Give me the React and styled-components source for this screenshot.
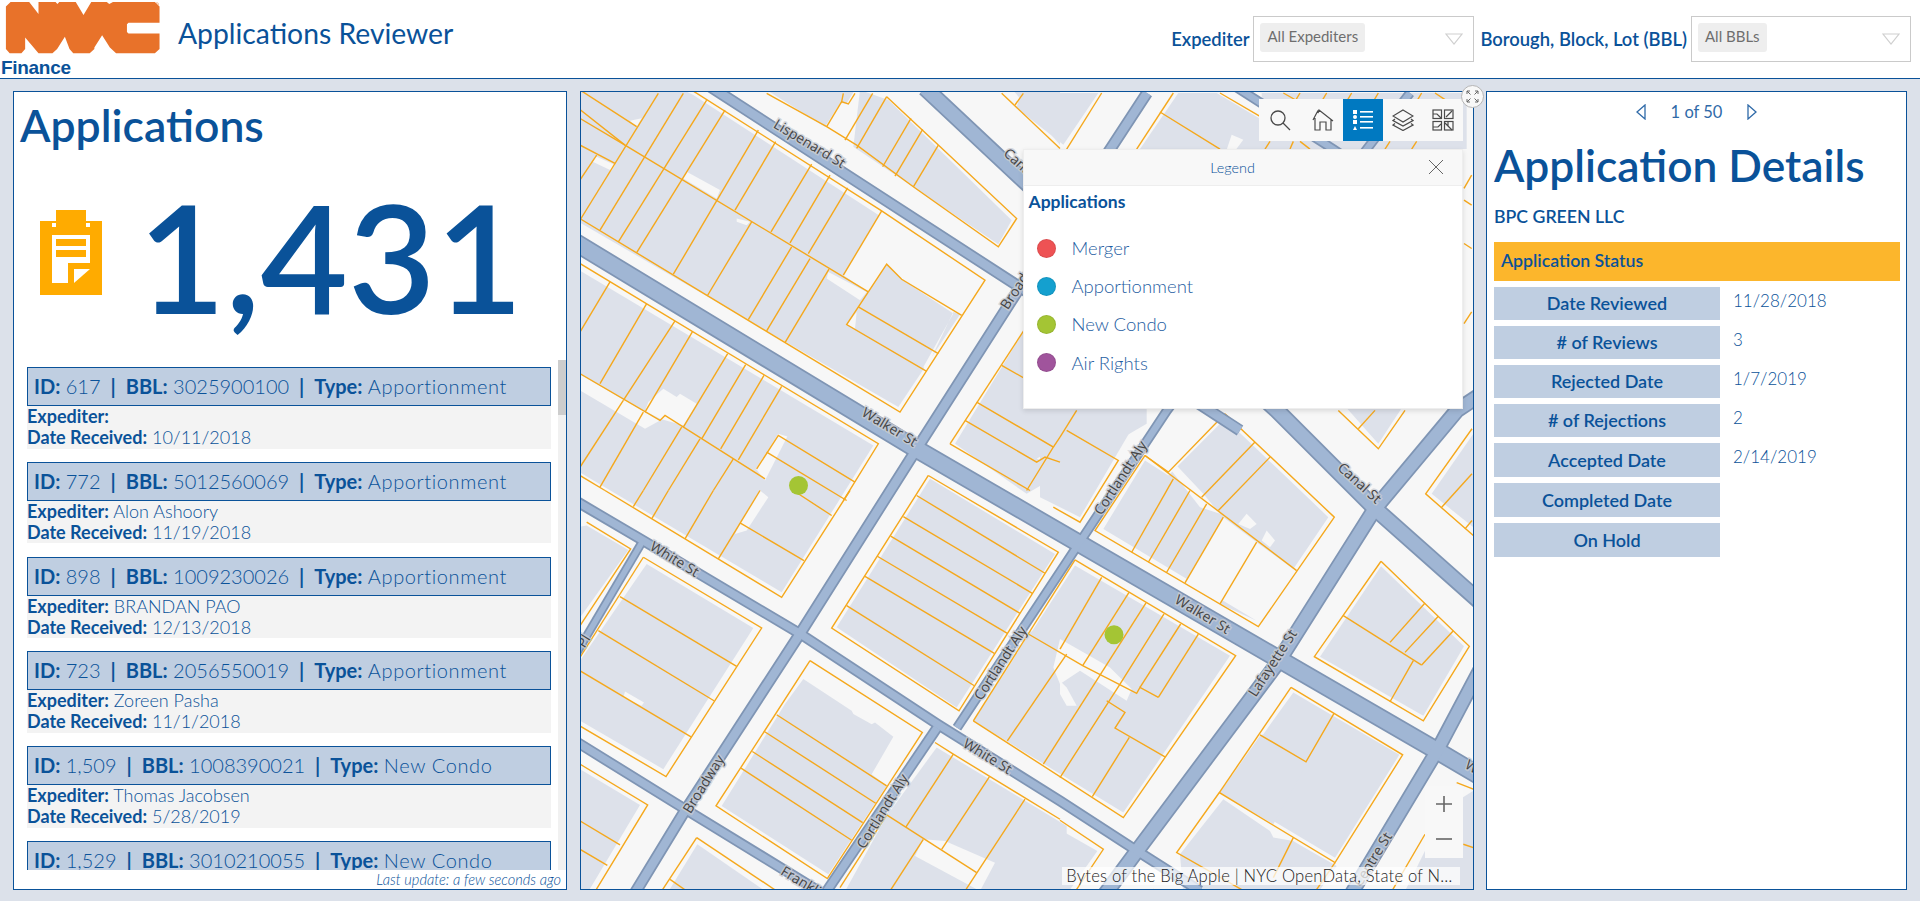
import React from "react";
import styled, { createGlobalStyle } from "styled-components";

const BLUE = "#0a5299";
const FONT = `Lato, "Open Sans", "Liberation Sans", sans-serif`;

const Global = createGlobalStyle`
  html, body { margin: 0; padding: 0; height: 100%; overflow: hidden; }
  body { background: #dce1ea; font-family: ${FONT}; color: ${BLUE}; }
  * { box-sizing: border-box; }
`;

const Page = styled.div`
  width: 1920px;
  height: 901px;
  display: flex;
  flex-direction: column;
`;

/* ---------- header ---------- */
const Header = styled.header`
  height: 79px;
  background: #fff;
  border-bottom: 1px solid ${BLUE};
  display: flex;
  align-items: flex-start;
  padding-right: 9px;
`;
const LogoBox = styled.div`
  width: 178px;
  height: 78px;
  display: flex;
  flex-direction: column;
  padding-top: 1px;
  svg { display: block; }
`;
const FinanceText = styled.div`
  font-family: "Liberation Sans", Arial, sans-serif;
  font-weight: 700;
  font-size: 19px;
  line-height: 20px;
  letter-spacing: -0.3px;
  padding: 0 0 0 1px;
  margin-top: 3px;
`;
const AppTitle = styled.h1`
  margin: 15px 0 0;
  font-size: 28.3px;
  line-height: 36px;
  font-weight: 400;
  flex: 1;
`;
const FilterLabel = styled.label`
  font-size: 18.4px;
  font-weight: 600;
  line-height: 22px;
  margin: 28px 4px 0 0;
  white-space: nowrap;
`;
const Select = styled.div`
  width: ${p => p.$w}px;
  height: 46px;
  margin: 16px 6px 0 0;
  border: 1px solid #cacaca;
  background: #fff;
  padding: 6px;
  display: flex;
  justify-content: space-between;
  &:last-child { margin-right: 0; }
`;
const Chip = styled.span`
  height: 29px;
  padding: 0 7px;
  background: #eee;
  border-radius: 3px;
  color: #6e6e6e;
  font-size: 15px;
  line-height: 27px;
`;
const Caret = styled.svg`
  width: 18px;
  height: 12px;
  margin: 10px 4px 0 0;
`;

/* ---------- main grid ---------- */
const Main = styled.main`
  flex: 1;
  min-height: 0;
  display: grid;
  grid-template-columns: 554px 1fr 421px;
  column-gap: 12.5px;
  padding: 12px 13px 11px;
`;
const Panel = styled.section`
  position: relative;
  background: #fff;
  border: 1px solid ${BLUE};
  min-height: 0;
  display: flex;
  flex-direction: column;
`;

/* ---------- left panel ---------- */
const BigTitle = styled.h2`
  margin: 0;
  font-weight: 600;
  font-size: 44.5px;
  line-height: 52px;
  padding: ${p => p.$pad || "7px 0 0 6px"};
`;
const StatRow = styled.div`
  height: 209px;
  display: flex;
  align-items: center;
  padding-left: 26px;
`;
const ClipIcon = styled.svg`
  width: 62px;
  height: 85px;
  flex: none;
  margin-top: -6px;
`;
const StatNumber = styled.div`
  font-family: ${FONT};
  font-size: 151px;
  line-height: 150px;
  font-weight: 600;
  margin-left: 36px;
  margin-top: 0;
`;
const ListWrap = styled.div`
  position: relative;
  flex: 1;
  min-height: 0;
  overflow: hidden;
  padding: 7px 15px 0 13px;
`;
const Track = styled.div`
  position: absolute;
  top: 0;
  right: 0;
  bottom: 0;
  width: 8px;
  background: #f1f1f1;
`;
const Thumb = styled.div`
  height: 55px;
  background: #cdcdcd;
`;
const Card = styled.article`
  margin-bottom: 13.3px;
`;
const CardHead = styled.div`
  height: 39px;
  border: 1px solid ${BLUE};
  background: #bfcee1;
  padding-left: 6px;
  font-size: 20px;
  line-height: 36px;
  font-weight: 300;
  white-space: nowrap;
  b { font-weight: 700; }
  i { font-style: normal; font-weight: 700; margin: 0 10px; }
  em { font-style: normal; letter-spacing: 0.62px; }
`;
const CardBody = styled.div`
  height: 42.5px;
  background: #f3f3f3;
  font-size: 18px;
  line-height: 21px;
  font-weight: 300;
  white-space: nowrap;
  b { font-weight: 700; }
`;
const LastUpdate = styled.div`
  height: 19px;
  padding-right: 5px;
  text-align: right;
  font-size: 14.6px;
  line-height: 19px;
  font-style: italic;
  font-weight: 300;
`;

/* ---------- map panel ---------- */
const MapSvg = styled.svg`
  flex: 1;
  display: block;
  width: 100%;
  height: 100%;
  min-height: 0;
`;
const Toolbar = styled.div`
  position: absolute;
  top: 7px;
  right: 10px;
  height: 42px;
  display: flex;
  padding-left: 4px;
  background: #f8f8f8;
`;
const ToolButton = styled.div`
  width: 40px;
  height: 42px;
  display: flex;
  align-items: center;
  justify-content: center;
  padding-right: ${p => p.$nudge || 0}px;
  background: ${p => (p.$active ? "#0079c1" : "transparent")};
`;
const ExpandButton = styled.div`
  position: absolute;
  top: -7px;
  right: -11px;
  width: 23px;
  height: 23px;
  border-radius: 50%;
  background: #f8f8f8;
  border: 1px solid #b5b5b5;
  display: flex;
  align-items: center;
  justify-content: center;
`;
const Legend = styled.div`
  position: absolute;
  top: 57px;
  right: 10px;
  width: 440px;
  height: 260px;
  background: #fff;
  border: 1px solid #eee;
  box-shadow: 0 2px 5px rgba(0, 0, 0, 0.12);
`;
const LegendHead = styled.div`
  position: relative;
  height: 36px;
  background: #f8f8f8;
  border-bottom: 1px solid #eee;
  text-align: center;
  font-size: 14.4px;
  font-weight: 300;
  line-height: 36px;
  padding-right: 20px;
  svg { position: absolute; top: 9px; right: 18px; }
`;
const LegendTitle = styled.div`
  font-size: 17.5px;
  font-weight: 700;
  line-height: 20px;
  padding: 6px 0 0 5px;
  height: 36px;
`;
const LegendList = styled.div`
  display: flex;
  flex-direction: column;
  padding: 7px 0 0 13px;
`;
const LegendItem = styled.div`
  height: 38.2px;
  display: flex;
  align-items: center;
  gap: 16px;
  font-size: 18.5px;
  font-weight: 300;
  color: #1f5ea2;
`;
const Dot = styled.span`
  width: 19px;
  height: 19px;
  border-radius: 50%;
  background: ${p => p.$c};
  border: 1px solid rgba(0, 0, 0, 0.08);
`;
const ZoomBox = styled.div`
  position: absolute;
  right: 10px;
  bottom: 31px;
  width: 38px;
  height: 72px;
  background: #f8f8f8;
  display: flex;
  flex-direction: column;
  align-items: center;
  justify-content: space-around;
  padding: 0 0 2px;
`;
const Attribution = styled.div`
  position: absolute;
  right: 13px;
  bottom: 4px;
  height: 18px;
  padding: 0 7px 0 4px;
  background: rgba(255, 255, 255, 0.72);
  font-size: 16.6px;
  line-height: 18px;
  font-weight: 300;
  color: #222;
  letter-spacing: 0.2px;
  white-space: nowrap;
`;

/* ---------- details ---------- */
const Pager = styled.div`
  height: 38px;
  display: flex;
  align-items: center;
  justify-content: center;
  gap: 25px;
  font-size: 16.5px;
  font-weight: 400;
  color: #2f6aa8;
  padding-top: 2px;
`;
const DetailTitle = styled(BigTitle)`
  padding: 6px 0 0 7px;
  font-size: 44.3px;
  line-height: 58px;
`;
const Company = styled.div`
  font-size: 17.7px;
  font-weight: 600;
  line-height: 20px;
  padding: 13px 0 0 7px;
`;
const StatusBar = styled.div`
  height: 39px;
  margin: 15px 6px 6px 7px;
  padding-left: 7px;
  background: #fcb62c;
  font-size: 17.7px;
  font-weight: 600;
  line-height: 38px;
`;
const Rows = styled.div`
  display: flex;
  flex-direction: column;
  gap: 6px;
  padding-left: 7px;
`;
const Row = styled.div`
  display: flex;
`;
const RowLabel = styled.div`
  width: 226px;
  height: ${p => p.$h || 33}px;
  background: #bfcee1;
  text-align: center;
  font-size: 18px;
  font-weight: 600;
  line-height: ${p => p.$h || 33}px;
`;
const RowValue = styled.div`
  padding-left: 13px;
  font-size: 17px;
  font-weight: 300;
  line-height: 28px;
`;

/* ---------- map data, in crop coordinates (3 units = 1px) ---------- */
const FRAMES = [
  {
    o: [580, 90],
    gray: [
      "340,15 1205,575 955,950 -100,340 -100,-200",
      "-10,535 880,1065 605,1505 -10,1140",
      "560,0 735,110 780,40 800,40 830,-10",
      "840,0 925,30 1295,390 1255,462 820,170",
      "1125,1060 1345,700 1700,700 1700,1000 1340,1210",
      "1290,-10 1440,-10 1440,165",
      "0,180 45,200 0,280"
    ],
    cut: [
      "905,362 1215,570 1145,675 1120,665 1060,790 1040,843 1030,830 1120,670 965,567 920,522 865,605 790,555",
      "320,245 420,300 410,325 310,265",
      "45,198 105,225 95,242 38,215",
      "150,92 185,85 170,110",
      "745,545 860,605 840,630 740,565",
      "800,703 830,665 825,715",
      "0,852 240,990 195,1015 0,900",
      "205,935 250,895 290,920 300,910 350,940 310,1005 240,985 195,962",
      "595,1030 622,1038 555,1170 528,1135",
      "470,385 510,395 500,405 470,395",
      "1370,1105 1420,1075 1400,1115"
    ],
    lines: [
      "330,-3 905,362 1215,570 960,965 -100,325",
      "-100,-20 135,165 865,605",
      "0,85 135,165",
      "0,0 170,110",
      "235,10 0,390", "310,10 60,420", "380,30 115,455", "435,60 170,487",
      "535,120 280,552", "587,155 465,360", "515,395 383,615", "695,222 573,425",
      "750,255 630,458", "803,293 685,490", "905,362 790,555", "635,470 505,688",
      "690,505 560,722", "747,537 615,757", "865,605 920,522 965,567 1145,675",
      "865,605 800,703 1040,843", "835,650 1075,790",
      "50,195 0,270", "0,165 105,220",
      "0,520 895,1060 790,1230",
      "0,850 240,990 255,975 555,1165",
      "90,575 0,725", "200,640 60,880", "285,692 130,930", "337,725 195,965",
      "443,790 310,1010", "497,823 365,1045", "552,855 422,1075", "605,888 475,1108",
      "130,930 0,1130", "190,965 60,1190", "305,1010 190,1200", "360,1045 265,1200",
      "460,1105 400,1200", "530,1135 595,1035 825,1175", "560,1085 800,1230",
      "0,1155 75,1200",
      "560,10 740,110 830,165 1000,290 1255,470 1310,385 1075,165 920,20",
      "790,10 785,35 805,42 825,10", "785,35 740,110", "878,10 795,150", "920,20 830,175",
      "993,85 908,230", "1028,118 945,258", "1075,165 1000,290",
      "1265,10 1440,175", "1330,10 1305,45",
      "1110,1060 1345,700", "1110,1060 1350,1200",
      "1265,825 1440,925", "1190,935 1420,1070 1340,1200", "1155,990 1370,1115 1395,1100 1440,1115",
      "1420,1070 1440,1040"
    ]
  },
  {
    o: [580, 490],
    gray: [
      "200,220 520,412 250,835 0,690 0,510",
      "-10,110 20,105 145,178 -10,395",
      "0,835 180,942 20,1210 0,1210",
      "352,1060 570,1210 260,1210",
      "670,565 815,660 820,670 875,700 885,695 940,738 875,850 920,885 745,1150 425,945 590,680 615,640",
      "1050,-35 1425,190 1130,650 770,410",
      "1350,420 1460,480 1460,850 1195,690",
      "1070,770 1460,1005 1460,1210 790,1210 920,975"
    ],
    cut: [
      "135,602 192,635 185,645 130,620",
      "465,130 500,120 565,20 540,0 480,100",
      "1030,1045 1095,1050 1245,1115 1200,1200 1005,1095",
      "1350,790 1370,768 1402,790 1385,815"
    ],
    lines: [
      "190,200 545,412 258,857 -10,700", "190,200 0,500",
      "120,318 470,527", "55,420 402,630", "0,540 333,738",
      "20,95 152,175 0,405",
      "0,820 203,942 40,1210", "0,990 120,1062", "0,1075 82,1123",
      "350,1040 590,1200", "350,1040 245,1200", "270,1165 320,1200",
      "690,510 1027,725 742,1163 408,945 690,510",
      "590,672 920,885", "553,722 887,937", "517,782 848,995", "483,832 815,1048",
      "1045,-45 1435,185 1137,660 755,412 1045,-45",
      "1010,15 1395,248", "970,78 1357,308", "932,137 1320,368", "892,197 1282,428",
      "855,257 1243,488", "800,345 1183,585",
      "540,0 415,205", "400,0 315,145", "265,0 215,85", "190,0 160,48",
      "480,97 672,210", "640,0 755,75", "810,0 605,320 75,0",
      "1065,755 1120,790 1440,985", "1120,790 978,1008", "1228,858 1085,1075", "1335,925 1155,1200",
      "920,972 1190,1145", "1030,1045 930,1200", "780,1190 920,972"
    ]
  },
  {
    o: [1060, 400],
    gray: [
      "-60,0 265,0 60,350 -60,290",
      "495,55 805,350 700,505 590,425 480,610 590,660 130,385 255,180 325,225",
      "-260,960 45,495 510,765 190,1235",
      "-20,1275 112,1350 20,1480 -20,1480",
      "700,875 1018,1062 825,1370 640,1260 600,1005 610,1000",
      "490,1195 630,1290 640,1310 700,1320 725,1335 830,1395 770,1480 370,1480 360,1360",
      "600,1005 480,1175 640,1270 740,1090",
      "963,497 1212,737 1090,945 780,768",
      "840,0 955,130 1040,0",
      "1115,280 1240,100 1240,380",
      "1160,1220 1240,1170 1240,1480 1030,1480"
    ],
    cut: [
      "330,205 350,195 430,280 480,340 420,320",
      "535,370 560,340 590,370 570,385",
      "605,420 620,390 645,420 630,440",
      "490,350 590,425 480,610 375,547",
      "0,715 70,755 150,800 215,865 200,900 115,845 60,810 0,850 -20,800",
      "0,840 20,860 50,915 20,915 0,880"
    ],
    lines: [
      "495,40 823,350 595,678 105,390 255,165",
      "255,165 325,215 495,40", "340,235 215,455", "390,270 265,485", "440,310 320,515",
      "490,350 375,547", "590,425 480,610", "255,165 710,510",
      "585,125 425,290", "630,170 475,330",
      "20,90 175,180 60,365 -20,320", "50,30 0,110",
      "45,478 527,765 190,1250 -260,960", "45,478 -260,960",
      "125,530 0,745", "207,575 68,795", "258,607 -50,1090", "312,640 180,850 0,1130",
      "362,670 240,860", "415,700 295,890",
      "-95,700 68,795 230,878 240,860 295,890", "20,760 -158,1020",
      "140,900 195,935 165,982 315,1068", "208,1010 97,1187",
      "0,1258 130,1345 40,1480",
      "963,482 1228,737 1090,960 763,768 963,482",
      "850,645 1085,793", "1095,607 990,725", "1135,647 1035,755", "1180,690 1085,793",
      "1060,780 990,903",
      "693,860 1028,1062 825,1385 478,1175 350,1355 570,1480", "693,860 478,1175",
      "600,1002 738,1083 822,938", "700,1310 640,1430",
      "835,30 955,145 1035,30", "895,85 945,30",
      "1236,85 1097,280 1240,405", "1236,220 1145,320", "1236,360 1215,385",
      "1190,1145 1240,1165", "1240,1340 1210,1330", "1095,1300 990,1480",
      "825,1385 760,1480", "280,1465 300,1480"
    ]
  },
  {
    o: [1000, 88],
    gray: [
      "60,15 295,15 190,170 50,60",
      "535,15 1230,15 1400,15 1400,183 420,183"
    ],
    cut: [
      "695,140 730,155 700,195 680,185",
      "650,15 785,95 785,15"
    ],
    lines: [
      "305,15 200,183", "520,15 410,183", "480,72 660,183", "660,15 780,85",
      "850,15 930,60", "900,15 885,40", "980,15 965,40", "1055,15 1040,40",
      "1135,15 1120,40", "1265,15 1250,40", "1305,15 1335,35",
      "810,160 795,183", "880,160 870,183", "900,160 930,183", "1170,160 1155,183", "1250,160 1235,183"
    ]
  },
  {
    o: [1440, 140],
    gray: [],
    cut: [],
    lines: ["95,105 72,145", "72,180 95,195", "72,310 95,325", "95,515 72,550"]
  }
];

/* roads are in page coordinates: [points, full width] */
const ROADS = [
  ["560,233 917,449 1437,750 1490,781", 19],
  ["925,88 1020,177 1277,410 1375,508 1490,610", 17],
  ["700,80 1020,287 1240,430", 12],
  ["1225,80 1333,149 1440,220", 10],
  ["1147,93 1020,287 917,448 800,633 683,813 630,900", 12],
  ["1490,388 1457,410 1375,508 1277,663 1137,850 1100,900", 16],
  ["1490,650 1437,750 1350,895", 15],
  ["1410,93 1373,141 1167,410 957,727", 10],
  ["937,727 820,900", 11],
  ["570,497 643,540 800,633 937,723 1060,800 1137,850 1200,890", 11],
  ["570,737 683,807 830,897", 11],
  ["643,540 575,655", 9]
];

const LABELS = [
  ["Lispenard St", 810, 143, 31],
  ["Walker St", 890, 426, 31],
  ["Canal St", 1026, 168, 42],
  ["Broadway", 1021, 280, -57],
  ["White St", 675, 558, 31],
  ["White St", 988, 755, 31],
  ["Broadway", 703, 783, -58],
  ["Cortlandt Aly", 882, 810, -58],
  ["Cortlandt Aly", 1000, 662, -57],
  ["Cortlandt Aly", 1120, 477, -57],
  ["Walker St", 1203, 613, 31],
  ["Canal St", 1360, 482, 42],
  ["Lafayette St", 1272, 662, -57],
  ["Centre St", 1372, 858, -58],
  ["White St", 1490, 776, 31],
  ["Franklin St", 812, 886, 31],
  ["Pl", 583, 640, -58]
];

const MapDrawing = () => (
  <MapSvg viewBox="581 92 892 796" preserveAspectRatio="none">
    <rect x="570" y="80" width="920" height="820" fill="#f7f7f7" />
    {FRAMES.map((f, i) => (
      <g key={i} transform={`translate(${f.o[0]} ${f.o[1]}) scale(${1 / 3})`}>
        {f.gray.map((p, j) => <polygon key={j} points={p} fill="#dde1ea" />)}
        {f.cut.map((p, j) => <polygon key={j} points={p} fill="#f7f7f7" />)}
      </g>
    ))}
    {FRAMES.map((f, i) => (
      <g key={i} transform={`translate(${f.o[0]} ${f.o[1]}) scale(${1 / 3})`}>
        {f.lines.map((p, j) => (
          <polyline key={j} points={p} fill="none" stroke="#f5a81c" strokeWidth="1.4" vectorEffect="non-scaling-stroke" />
        ))}
      </g>
    ))}
    {ROADS.map(([p, w], i) => (
      <polyline key={i} points={p} fill="none" stroke="#7f95b4" strokeWidth={w} />
    ))}
    {ROADS.map(([p, w], i) => (
      <polyline key={i} points={p} fill="none" stroke="#a0b6d4" strokeWidth={w - 3.5} />
    ))}
    <circle cx="798.5" cy="485" r="9.5" fill="#a4c534" />
    <circle cx="1114" cy="634" r="9.5" fill="#a4c534" />
    {LABELS.map(([t, x, y, a], i) => (
      <text
        key={i}
        x={x}
        y={y}
        transform={`rotate(${a} ${x} ${y})`}
        textAnchor="middle"
        dominantBaseline="central"
        fontFamily="'Open Sans', sans-serif"
        fontSize="14"
        fill="#444"
        stroke="#c9ccd2"
        strokeWidth="3"
        strokeOpacity="0.75"
        paintOrder="stroke"
      >
        {t}
      </text>
    ))}
  </MapSvg>
);

/* ---------- icons ---------- */
const NycLogo = () => (
  <svg width="167" height="58" viewBox="0 0 500 174">
    <path
      fill="#e8722a"
      d="M0 18 L15 3 H75 L105 42 V3 H160 L166 10 L172 3 H225 L250 45 L275 3 H325 L333 10 L345 3 H480 L495 18 V70 H395 L390 75 V100 L395 105 H495 V155 L480 168 H355 L335 150 L310 110 L285 150 V155 L270 168 H217 L205 155 L190 115 L165 155 L150 168 H105 L62 118 V155 L50 168 H12 L0 155 Z"
    />
    <circle cx="487" cy="10" r="4.5" fill="none" stroke="#e8722a" strokeWidth="1.5" />
  </svg>
);

const CaretIcon = () => (
  <Caret viewBox="0 0 18 12">
    <path d="M1 1 H17 L9 11 Z" fill="none" stroke="#cfcfcf" strokeWidth="1.2" />
  </Caret>
);

const Clipboard = () => (
  <ClipIcon viewBox="0 0 62 85">
    <rect x="0" y="11" width="62" height="74" fill="#ffab00" />
    <rect x="16" y="0" width="30" height="13" fill="#ffab00" />
    <path d="M12 13 H16 V17 H46 V13 H50 V17 H12 Z" fill="#fff" />
    <path d="M12 25 H50 V53 H28 V73 H12 Z" fill="#fff" />
    <rect x="16" y="29" width="30" height="7" fill="#ffab00" />
    <rect x="16" y="40" width="30" height="7" fill="#ffab00" />
    <path d="M34 59 H50 L34 73 Z" fill="#fff" />
  </ClipIcon>
);

const SearchIcon = () => (
  <svg width="22" height="22" viewBox="0 0 22 22" fill="none" stroke="#4a4a4a" strokeWidth="1.3">
    <circle cx="9" cy="9" r="7" />
    <path d="M14 14 L21 21" />
  </svg>
);
const HomeIcon = () => (
  <svg width="22" height="22" viewBox="0 0 22 22" fill="none" stroke="#4a4a4a" strokeWidth="1.2">
    <path d="M1 11 L6 1.5 V4 L7 1 L21 12 M3 9 V21 H8 V13 H14 V21 H19 V10" />
  </svg>
);
const ListIcon = () => (
  <svg width="22" height="22" viewBox="0 0 22 22" fill="#fff">
    <rect x="1" y="1" width="4" height="4" /><rect x="8" y="2" width="13" height="1.6" />
    <circle cx="3" cy="8" r="2" /><rect x="8" y="7" width="13" height="1.6" />
    <rect x="1" y="11" width="4" height="4" /><rect x="8" y="12" width="13" height="1.6" />
    <path d="M1 21 L3 17 L5 21 Z" /><rect x="8" y="18" width="13" height="1.6" />
  </svg>
);
const LayersIcon = () => (
  <svg width="22" height="22" viewBox="0 0 22 22" fill="none" stroke="#4a4a4a" strokeWidth="1.2">
    <path d="M11 1 L21 7 L11 13 L1 7 Z M3 10 L1 11.5 L11 17 L21 11.5 L19 10 M3 14.5 L1 16 L11 21.5 L21 16 L19 14.5" />
  </svg>
);
const GalleryIcon = () => (
  <svg width="22" height="22" viewBox="0 0 22 22" fill="none" stroke="#4a4a4a" strokeWidth="1.2">
    <rect x="1" y="1" width="8.5" height="8.5" /><rect x="12.5" y="1" width="8.5" height="8.5" />
    <rect x="1" y="12.5" width="8.5" height="8.5" /><rect x="12.5" y="12.5" width="8.5" height="8.5" />
    <path d="M1 5 L5 5 L9 9 M14 8 L20 2 M1 18 H6 L9 15 M13 14 L20 21 M16 13 V17" />
  </svg>
);
const ExpandIcon = () => (
  <svg width="13" height="13" viewBox="0 0 13 13" fill="none" stroke="#666" strokeWidth="1">
    <path d="M1 4 V1 H4 M1 1 L4.5 4.5 M9 1 H12 V4 M12 1 L8.5 4.5 M1 9 V12 H4 M1 12 L4.5 8.5 M9 12 H12 V9 M12 12 L8.5 8.5" />
  </svg>
);
const CloseIcon = () => (
  <svg width="16" height="16" viewBox="0 0 16 16" stroke="#666" strokeWidth="1" fill="none">
    <path d="M1 1 L15 15 M15 1 L1 15" />
  </svg>
);
const PagerArrow = ({ flip }) => (
  <svg width="10" height="16" viewBox="0 0 10 16" fill="none" stroke="#2f6aa8" strokeWidth="1.3">
    <path d={flip ? "M1 1 L9 8 L1 15 Z" : "M9 1 L1 8 L9 15 Z"} />
  </svg>
);
const ZoomGlyph = ({ plus }) => (
  <svg width="16" height="16" viewBox="0 0 16 16" stroke="#666" strokeWidth="1.6" fill="none">
    <path d={plus ? "M0 8 H16 M8 0 V16" : "M0 8 H16"} />
  </svg>
);

/* ---------- data ---------- */
const APPS = [
  { id: "617", bbl: "3025900100", type: "Apportionment", exp: "", date: "10/11/2018" },
  { id: "772", bbl: "5012560069", type: "Apportionment", exp: "Alon Ashoory", date: "11/19/2018" },
  { id: "898", bbl: "1009230026", type: "Apportionment", exp: "BRANDAN PAO", date: "12/13/2018" },
  { id: "723", bbl: "2056550019", type: "Apportionment", exp: "Zoreen Pasha", date: "11/1/2018" },
  { id: "1,509", bbl: "1008390021", type: "New Condo", exp: "Thomas Jacobsen", date: "5/28/2019" },
  { id: "1,529", bbl: "3010210055", type: "New Condo", exp: "", date: "" }
];
const LEGEND = [
  ["Merger", "#ee5254"],
  ["Apportionment", "#14a0cf"],
  ["New Condo", "#a4c534"],
  ["Air Rights", "#a0549c"]
];
const DETAILS = [
  ["Date Reviewed", "11/28/2018", 33],
  ["# of Reviews", "3", 33],
  ["Rejected Date", "1/7/2019", 33],
  ["# of Rejections", "2", 33],
  ["Accepted Date", "2/14/2019", 34],
  ["Completed Date", "", 34],
  ["On Hold", "", 34]
];

export default function App() {
  return (
    <Page>
      <Global />
      <Header>
        <LogoBox>
          <NycLogo />
          <FinanceText>Finance</FinanceText>
        </LogoBox>
        <AppTitle>Applications Reviewer</AppTitle>
        <FilterLabel>Expediter</FilterLabel>
        <Select $w={221}>
          <Chip>All Expediters</Chip>
          <CaretIcon />
        </Select>
        <FilterLabel>Borough, Block, Lot (BBL)</FilterLabel>
        <Select $w={220}>
          <Chip>All BBLs</Chip>
          <CaretIcon />
        </Select>
      </Header>
      <Main>
        <Panel>
          <BigTitle>Applications</BigTitle>
          <StatRow>
            <Clipboard />
            <StatNumber>1,431</StatNumber>
          </StatRow>
          <ListWrap>
            {APPS.map(a => (
              <Card key={a.id}>
                <CardHead>
                  <b>ID:</b> {a.id}<i>|</i><b>BBL:</b> {a.bbl}<i>|</i><b>Type:</b> <em>{a.type}</em>
                </CardHead>
                <CardBody>
                  <b>Expediter:</b> {a.exp}
                  <br />
                  <b>Date Received:</b> {a.date}
                </CardBody>
              </Card>
            ))}
            <Track><Thumb /></Track>
          </ListWrap>
          <LastUpdate>Last update: a few seconds ago</LastUpdate>
        </Panel>
        <Panel>
          <MapDrawing />
          <Toolbar>
            <ToolButton $nudge={5}><SearchIcon /></ToolButton>
            <ToolButton><HomeIcon /></ToolButton>
            <ToolButton $active><ListIcon /></ToolButton>
            <ToolButton><LayersIcon /></ToolButton>
            <ToolButton><GalleryIcon /></ToolButton>
          </Toolbar>
          <ExpandButton><ExpandIcon /></ExpandButton>
          <Legend>
            <LegendHead>Legend<CloseIcon /></LegendHead>
            <LegendTitle>Applications</LegendTitle>
            <LegendList>
              {LEGEND.map(([name, c]) => (
                <LegendItem key={name}><Dot $c={c} />{name}</LegendItem>
              ))}
            </LegendList>
          </Legend>
          <ZoomBox>
            <ZoomGlyph plus />
            <ZoomGlyph />
          </ZoomBox>
          <Attribution>Bytes of the Big Apple | NYC OpenData, State of N…</Attribution>
        </Panel>
        <Panel>
          <Pager>
            <PagerArrow />
            <span>1 of 50</span>
            <PagerArrow flip />
          </Pager>
          <DetailTitle as="h2">Application Details</DetailTitle>
          <Company>BPC GREEN LLC</Company>
          <StatusBar>Application Status</StatusBar>
          <Rows>
            {DETAILS.map(([label, value, h]) => (
              <Row key={label}>
                <RowLabel $h={h}>{label}</RowLabel>
                <RowValue>{value}</RowValue>
              </Row>
            ))}
          </Rows>
        </Panel>
      </Main>
    </Page>
  );
}
